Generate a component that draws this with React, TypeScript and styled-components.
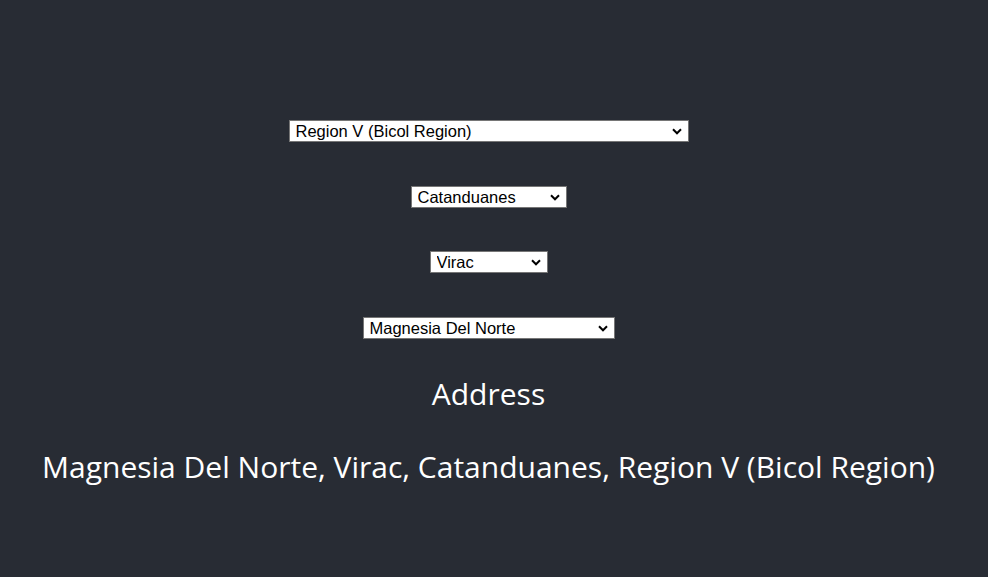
import React, { useState } from "react";
import styled, { createGlobalStyle } from "styled-components";

const Global = createGlobalStyle`
  html, body { margin: 0; padding: 0; background: #282c34; }
  body { font-family: "Open Sans", "Noto Sans", sans-serif; }
`;

const Page = styled.div`
  min-height: 577px;
  background: #282c34;
  display: flex;
  flex-direction: column;
  align-items: center;
  padding: 120px 11px 0 0;
  box-sizing: border-box;
  color: #ffffff;
`;

const Selects = styled.div`
  display: flex;
  flex-direction: column;
  align-items: center;
  gap: 43.7px;
`;

const SelectWrap = styled.div<{ $w: number }>`
  position: relative;
  width: ${(p) => p.$w}px;
  height: 22px;
`;

const Select = styled.select`
  appearance: none;
  -webkit-appearance: none;
  display: block;
  width: 100%;
  height: 22px;
  margin: 0;
  box-sizing: border-box;
  border: 1px solid #767676;
  border-radius: 0;
  background: #ffffff;
  color: #000000;
  font-family: "Liberation Sans", Arial, sans-serif;
  font-size: 16.5px;
  line-height: 18px;
  padding: 0 20px 0 6px;
  outline: none;
`;

const Chevron = styled.svg`
  position: absolute;
  right: 7px;
  top: 8px;
  width: 10px;
  height: 7px;
  pointer-events: none;
`;

const Heading = styled.div`
  margin-top: 35px;
  font-size: 30px;
  line-height: 40px;
  color: #ffffff;
`;

const AddressLine = styled.div`
  margin-top: 33px;
  font-size: 30px;
  line-height: 40px;
  color: #ffffff;
  white-space: nowrap;
`;

function Dropdown({ width, value, options, onChange }: { width: number; value: string; options: string[]; onChange: (v: string) => void }) {
  return (
    <SelectWrap $w={width}>
      <Select value={value} onChange={(e) => onChange(e.target.value)}>
        {options.map((o) => (
          <option key={o} value={o}>{o}</option>
        ))}
      </Select>
      <Chevron viewBox="0 0 10 7">
        <path d="M1 1.3 L5 5.3 L9 1.3" fill="none" stroke="#000" strokeWidth="2" />
      </Chevron>
    </SelectWrap>
  );
}

export default function App() {
  const [region, setRegion] = useState("Region V (Bicol Region)");
  const [province, setProvince] = useState("Catanduanes");
  const [city, setCity] = useState("Virac");
  const [barangay, setBarangay] = useState("Magnesia Del Norte");

  return (
    <>
      <Global />
      <Page>
        <Selects>
          <Dropdown width={400} value={region} onChange={setRegion} options={["Region V (Bicol Region)"]} />
          <Dropdown width={156} value={province} onChange={setProvince} options={["Catanduanes"]} />
          <Dropdown width={118} value={city} onChange={setCity} options={["Virac"]} />
          <Dropdown width={252} value={barangay} onChange={setBarangay} options={["Magnesia Del Norte"]} />
        </Selects>
        <Heading>Address</Heading>
        <AddressLine>{`${barangay}, ${city}, ${province}, ${region}`}</AddressLine>
      </Page>
    </>
  );
}
